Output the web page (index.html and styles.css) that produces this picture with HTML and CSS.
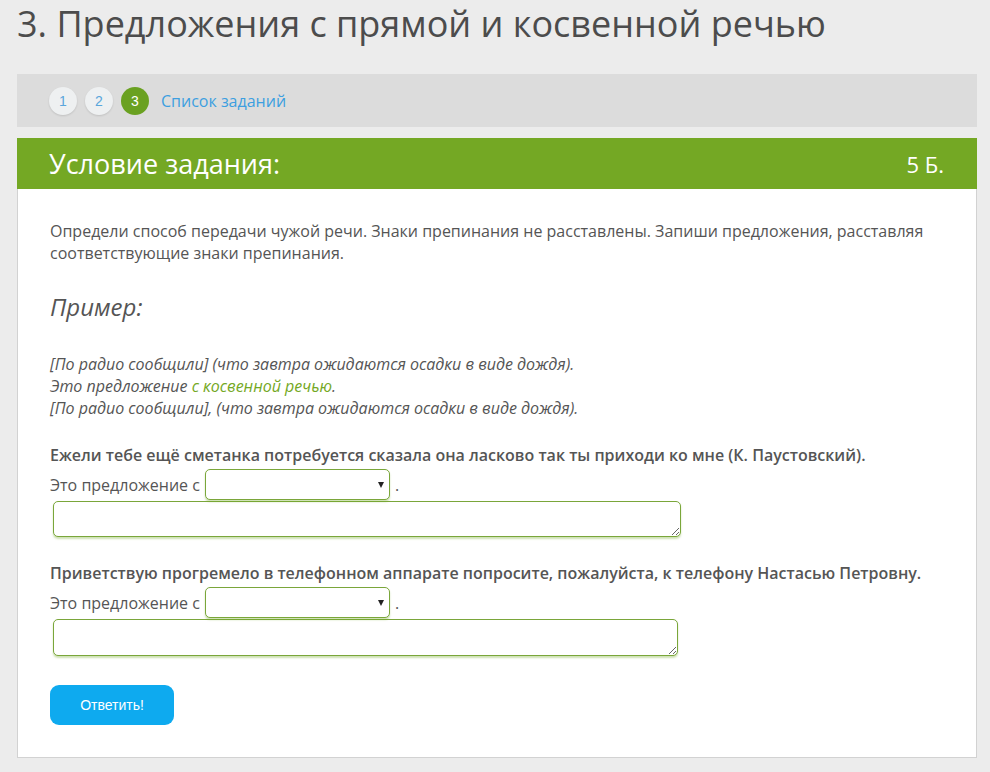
FILE: index.html
```html
<!DOCTYPE html>
<html lang="ru">
<head>
    <meta charset="UTF-8">
    <title>Предложения с прямой и косвенной речью</title>
    <link rel="stylesheet" href="styles.css">
</head>
<body>
    <h1 class="page-title">3. Предложения с прямой и косвенной речью</h1>

    <div class="steps">
        <span class="step">1</span>
        <span class="step">2</span>
        <span class="step step-active">3</span>
        <a class="steps-link" href="#">Список заданий</a>
    </div>

    <div class="task">
        <div class="task-head">
            <h2>Условие задания:</h2>
            <span class="points">5 Б.</span>
        </div>
        <div class="task-body">
            <p class="intro">Определи способ передачи чужой речи. Знаки препинания не расставлены. Запиши предложения, расставляя соответствующие знаки препинания.</p>

            <h3 class="example-title">Пример:</h3>
            <p class="example">
                [По радио сообщили] (что завтра ожидаются осадки в виде дождя).<br>
                Это предложение <span class="hint">с косвенной речью</span>.<br>
                [По радио сообщили], (что завтра ожидаются осадки в виде дождя).
            </p>

            <div class="question">
                <p class="sentence">Ежели тебе ещё сметанка потребуется сказала она ласково так ты приходи ко мне (К. Паустовский).</p>
                <div class="choice">Это предложение с <span class="pick-wrap"><select class="pick"><option></option><option>прямой речью</option><option>косвенной речью</option></select></span> .</div>
                <textarea class="answer"></textarea>
            </div>

            <div class="question">
                <p class="sentence">Приветствую прогремело в телефонном аппарате попросите, пожалуйста, к телефону Настасью Петровну.</p>
                <div class="choice">Это предложение с <span class="pick-wrap"><select class="pick"><option></option><option>прямой речью</option><option>косвенной речью</option></select></span> .</div>
                <textarea class="answer answer-short"></textarea>
            </div>

            <button class="submit">Ответить!</button>
        </div>
    </div>
</body>
</html>
```

FILE: styles.css
```css
body {
    margin: 0;
    padding: 0 13px 0 17px;
    background: #ececec;
    font-family: 'Open Sans', sans-serif;
    color: #555;
}
.page-title {
    margin: 0;
    padding: 2px 0 28px;
    font-size: 36px;
    font-weight: 400;
    line-height: 44px;
    color: #4c4c4c;
}
.steps {
    display: flex;
    align-items: center;
    gap: 8px;
    height: 53px;
    padding-left: 32px;
    background: #dcdcdc;
}
.step {
    display: flex;
    justify-content: center;
    align-items: center;
    width: 28px;
    height: 28px;
    border-radius: 50%;
    background: #eef0f1;
    box-shadow: 0 1px 2px rgba(0, 0, 0, 0.12);
    color: #5aa6dc;
    font-family: 'Liberation Sans', Arial, sans-serif;
    font-size: 14px;
}
.step-active {
    background: #6aa121;
    color: #fff;
    box-shadow: none;
}
.steps-link {
    margin-left: 4px;
    color: #3d9fe0;
    font-size: 16px;
    text-decoration: none;
}
.task {
    margin-top: 11px;
    background: #fff;
    border: 1px solid #d2d2d2;
    border-top: none;
}
.task-head {
    display: flex;
    justify-content: space-between;
    align-items: center;
    height: 51px;
    padding: 0 33px 0 32px;
    margin: 0 -1px;
    background: #74a824;
    color: #fff;
}
.task-head h2 {
    margin: 0;
    font-size: 27px;
    font-weight: 400;
}
.points {
    font-size: 22px;
}
.task-body {
    padding: 31px 32px 32px;
}
.intro {
    margin: 0;
    font-size: 16px;
    line-height: 22px;
}
.example-title {
    margin: 26px 0 0;
    font-size: 24px;
    font-style: italic;
    font-weight: 400;
    line-height: 34px;
}
.example {
    margin: 29px 0 0;
    font-size: 16px;
    font-style: italic;
    line-height: 22px;
}
.hint {
    color: #74a824;
}
.question {
    margin-top: 25px;
}
.question + .question {
    margin-top: 25px;
}
.sentence {
    margin: 0;
    font-size: 16px;
    font-weight: 600;
    line-height: 22px;
}
.choice {
    display: flex;
    align-items: center;
    gap: 5px;
    margin-top: 3px;
    font-size: 16px;
}
.pick-wrap {
    position: relative;
    display: inline-flex;
}
/* small solid arrow over the native select */
.pick-wrap::after {
    content: "";
    position: absolute;
    right: 6px;
    top: 13px;
    border-left: 3px solid transparent;
    border-right: 3px solid transparent;
    border-top: 6px solid #222;
    pointer-events: none;
}
.pick {
    appearance: none;
    -webkit-appearance: none;
    width: 185px;
    height: 31px;
    border: 1px solid #7aa63a;
    border-radius: 5px;
    background: #fff;
    box-shadow: 0 2px 2px rgba(116, 168, 36, 0.35);
}
.answer {
    display: block;
    width: 628px;
    height: 36px;
    margin: 1px 0 0 3px;
    padding: 0;
    box-sizing: border-box;
    border: 1px solid #7aa63a;
    border-radius: 5px;
    box-shadow: 0 2px 2px rgba(116, 168, 36, 0.35);
}
.answer-short {
    width: 625px;
    height: 37px;
}
.submit {
    margin-top: 29px;
    width: 124px;
    height: 40px;
    border: none;
    border-radius: 9px;
    background: #0eaaef;
    color: #fff;
    font-family: 'Liberation Sans', Arial, sans-serif;
    font-size: 14px;
    cursor: pointer;
}
```
